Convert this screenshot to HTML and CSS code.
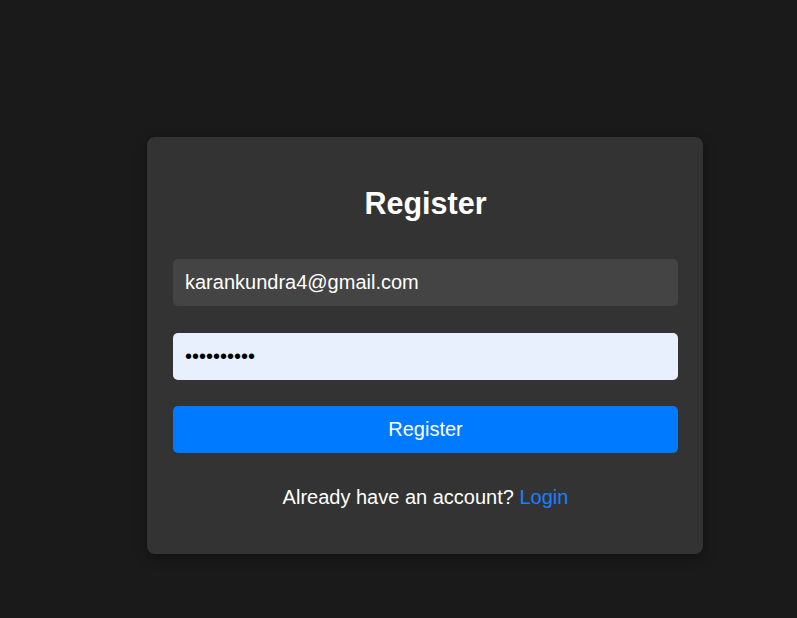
FILE: index.html
```html
<!DOCTYPE html>
<html lang="en">
<head>
<meta charset="utf-8">
<title>Register</title>
<link rel="stylesheet" href="styles.css">
</head>
<body>
<main class="page">
  <form class="card" onsubmit="return false">
    <h2 class="title">Register</h2>
    <input class="field field-email" type="email" value="karankundra4@gmail.com">
    <input class="field field-password" type="password" value="karan12345">
    <button class="btn" type="submit">Register</button>
    <p class="footer">Already have an account? <a class="link" href="#">Login</a></p>
  </form>
</main>
</body>
</html>
```
FILE: styles.css
```css
html, body {
  margin: 0;
  padding: 0;
  background: #1a1a1a;
  font-family: "Liberation Sans", Arial, sans-serif;
}
.page {
  min-height: 100vh;
  box-sizing: border-box;
  padding: 137px 0 0 147px;
}
.card {
  width: 556px;
  box-sizing: border-box;
  background: #333333;
  border-radius: 8px;
  padding: 49px 25px 45px 26px;
  box-shadow: 0 4px 12px rgba(0, 0, 0, 0.35);
  display: flex;
  flex-direction: column;
}
.title {
  margin: 0 0 39px;
  font-size: 30.5px;
  line-height: 34px;
  font-weight: bold;
  color: #ffffff;
  text-align: center;
}
.field {
  display: block;
  width: 100%;
  height: 47px;
  box-sizing: border-box;
  border: none;
  border-radius: 5px;
  padding: 0 12px;
  margin: 0 0 27px;
  font-family: "Liberation Sans", Arial, sans-serif;
  font-size: 20px;
  outline: none;
}
.field-email {
  background: #444444;
  color: #ffffff;
}
.field-password {
  background: #e8f0fe;
  color: #000000;
  margin-bottom: 26px;
}
.btn {
  display: block;
  width: 100%;
  height: 47px;
  border: none;
  border-radius: 5px;
  background: #007bff;
  color: #ffffff;
  font-family: "Liberation Sans", Arial, sans-serif;
  font-size: 20px;
  cursor: pointer;
}
.footer {
  margin: 33px 0 0;
  font-size: 20px;
  line-height: 23px;
  color: #ffffff;
  text-align: center;
}
.link {
  color: #1a7fff;
  text-decoration: none;
}
```
